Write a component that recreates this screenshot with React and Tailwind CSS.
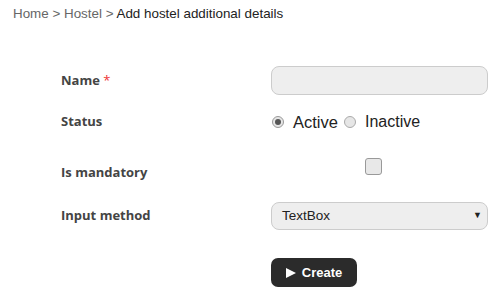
export default function App() {
  return (
    <div className="w-[503px] h-[294px] bg-white relative overflow-hidden" style={{ fontFamily: '"Liberation Sans", Arial, sans-serif' }}>
      <div className="pl-[13px] pt-[6px] text-[13.4px] leading-[16px] text-[#666]">
        Home &gt; Hostel &gt; <span className="text-[#222]">Add hostel additional details</span>
      </div>
      <div className="flex flex-col pl-[61px] mt-[44px]">
        {/* Name */}
        <div className="flex items-center h-[29px]">
          <div className="w-[210px] text-[13px] font-bold text-[#444]" style={{ fontFamily: '"Open Sans", sans-serif' }}>
            Name <span className="text-[#e33] font-normal">*</span>
          </div>
          <div className="w-[217px] h-[29px] rounded-[8px] border border-[#ccc] bg-[#eee]" />
        </div>
        {/* Status */}
        <div className="flex items-center h-[24px] mt-[15px]">
          <div className="w-[210px] text-[13px] font-bold text-[#444]" style={{ fontFamily: '"Open Sans", sans-serif' }}>
            Status
          </div>
          <div className="flex items-center text-[16px] text-[#222]">
            <span className="ml-[1px] w-[12px] h-[12px] rounded-full border border-[#999] bg-[#e6e6e6] flex items-center justify-center">
              <span className="w-[6px] h-[6px] rounded-full bg-[#555]" />
            </span>
            <span className="ml-[9px] text-[16.5px]">Active</span>
            <span className="ml-[6px] w-[12px] h-[12px] rounded-full border border-[#aaa] bg-[#e6e6e6]" />
            <span className="ml-[9px]">Inactive</span>
          </div>
        </div>
        {/* Is mandatory */}
        <div className="flex items-start h-[28px] mt-[24px]">
          <div className="w-[210px] mt-[5px] text-[13px] leading-[18px] font-bold text-[#444]" style={{ fontFamily: '"Open Sans", sans-serif' }}>
            Is mandatory
          </div>
          <div className="ml-[94px] w-[17px] h-[17px] rounded-[3px] border border-[#999] bg-[#e8e8e8]" />
        </div>
        {/* Input method */}
        <div className="flex items-center h-[28px] mt-[16px]">
          <div className="w-[210px] text-[13px] font-bold text-[#444]" style={{ fontFamily: '"Open Sans", sans-serif' }}>
            Input method
          </div>
          <div className="w-[217px] h-[28px] rounded-[8px] border border-[#ccc] bg-[#eee] flex items-center justify-between pl-[10px] pr-[5px] text-[13.5px] text-[#222]">
            <span>TextBox</span>
            <span className="text-[9px]">▼</span>
          </div>
        </div>
        {/* Button */}
        <div className="flex mt-[28px]">
          <div className="ml-[210px] w-[86px] h-[29px] rounded-[7px] bg-[#2b2b2b] text-white text-[13px] font-bold flex items-center justify-center gap-[6px]">
            <svg width="10" height="10" viewBox="0 0 10 10"><path d="M0 0 L10 5 L0 10 Z" fill="#fff" /></svg>
            <span>Create</span>
          </div>
        </div>
      </div>
    </div>
  );
}
